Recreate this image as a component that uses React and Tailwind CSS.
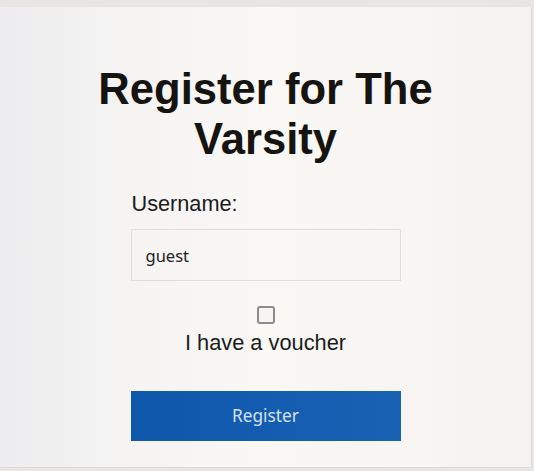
import { useState } from 'react';

const App = () => {
  const [username, setUsername] = useState('guest');
  const [voucher, setVoucher] = useState(false);

  return (
    <div className="min-h-[471px] w-[534px] bg-[#e7e6e4] pt-[7px]">
      <div className="w-[532px] h-[461px] border-r border-b border-[#dcdad8] bg-[linear-gradient(90deg,#ededef_0%,#f5f4f3_25%,#f9f8f5_50%,#f8f5f2_80%,#f4f1ee_100%)] flex flex-col items-center pt-[57px] font-['Liberation_Sans',Arial,sans-serif]">
        <h1 className="w-[400px] text-center text-[43.6px] leading-[50px] font-bold text-[#161410]">
          Register for The Varsity
        </h1>

        <form className="w-[270px] flex flex-col mt-[28px]" onSubmit={(e) => e.preventDefault()}>
          <label htmlFor="username" className="text-[21.7px] leading-[24px] text-[#1b1b1b] pl-[1px]">
            Username:
          </label>
          <input
            id="username"
            value={username}
            onChange={(e) => setUsername(e.target.value)}
            className="mt-[13px] h-[52px] w-[270px] border border-[#e0dcd8] bg-transparent px-[14px] text-[16.5px] text-[#222] font-['Noto_Sans',sans-serif] outline-none"
          />

          <div className="flex flex-col items-center mt-[25px]">
            <input
              type="checkbox"
              checked={voucher}
              onChange={(e) => setVoucher(e.target.checked)}
              className="appearance-none w-[18px] h-[18px] border-2 border-[#8c8b90] rounded-[3px] bg-[#f6f5f4] m-0"
            />
            <span className="mt-[7px] text-[21.8px] leading-[24px] text-[#1b1b1b]">I have a voucher</span>
          </div>

          <button
            type="submit"
            className="mt-[36px] h-[50px] w-[270px] bg-[linear-gradient(90deg,#0f57ab_0%,#155db0_60%,#1a62b4_100%)] text-[#d6e1f1] text-[17.3px] font-['Noto_Sans',sans-serif]"
          >
            Register
          </button>
        </form>
      </div>
    </div>
  );
};

export default App;
